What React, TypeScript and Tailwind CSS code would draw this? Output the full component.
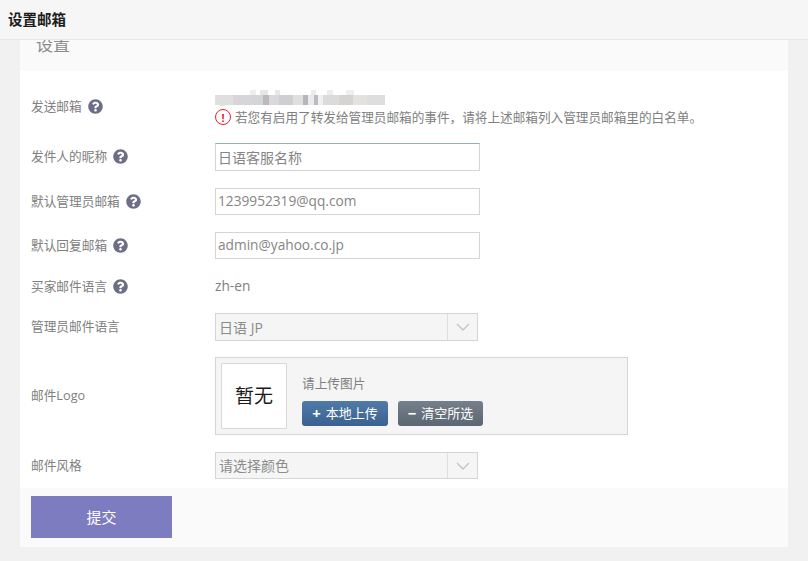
import { FaQuestionCircle } from "react-icons/fa";

const font = "font-['Open_Sans','Noto_Sans_CJK_SC',sans-serif]";

// blurred-out address in the first row, as [x, width, colour]
const smudgeTop: [number, number, string][] = [
  [35, 6, "#eceef0"],
  [45, 8, "#e4e6ea"],
  [60, 5, "#e6e7ea"],
  [96, 5, "#eeeae8"],
  [112, 6, "#eeecea"],
  [131, 8, "#f0eeec"],
];
const smudgeMid: [number, number, string][] = [
  [0, 18, "#dfdfe0"],
  [18, 18, "#d6d6d8"],
  [36, 12, "#d2d6d9"],
  [48, 6, "#bdb9ba"],
  [54, 10, "#d8d9db"],
  [64, 14, "#cfcfd1"],
  [78, 10, "#dfdfdf"],
  [88, 5, "#b6b6ba"],
  [93, 6, "#ebebeb"],
  [99, 4, "#bcbcc0"],
  [103, 5, "#f0f0f0"],
  [108, 16, "#dcdbd9"],
  [124, 14, "#d6d4d2"],
  [138, 14, "#e4e2de"],
  [152, 18, "#dedede"],
];

const Help = () => <FaQuestionCircle className="size-[15px] shrink-0 text-[#6d6e85]" />;

const Label = ({ text, help }: { text: string; help?: boolean }) => (
  <div className="flex items-center gap-[6px] text-[12.7px] text-[#808080]">
    <span>{text}</span>
    {help && <Help />}
  </div>
);

const TextInput = ({ value, focused, latin }: { value: string; focused?: boolean; latin?: boolean }) => (
  <div
    className={`flex w-[265px] items-center border border-[#d5d5d5] px-[2px] text-[#858585] ${
      latin ? "text-[13.7px]" : "text-[14px]"
    } ${focused ? "h-[28px] border-t-[#8fabd6]" : "h-[27px]"}`}
  >
    {value}
  </div>
);

const SelectBox = ({ value, tall }: { value: string; tall?: boolean }) => (
  <div
    className={`flex w-[263px] items-stretch border border-[#d5d5d5] bg-[#f5f5f5] text-[14px] text-[#8c8c8c] ${
      tall ? "h-[28px]" : "h-[27px]"
    }`}
  >
    <div className="flex flex-1 items-center px-[3px]">{value}</div>
    <div className="flex w-[30px] items-center justify-center border-l border-[#dedede]">
      <svg width="14" height="8" viewBox="0 0 14 8" fill="none" stroke="#c4c4c4" strokeWidth="1.4">
        <path d="M1 1l6 6 6-6" />
      </svg>
    </div>
  </div>
);

export default function App() {
  return (
    <div className={`flex h-[561px] w-[808px] flex-col overflow-hidden bg-[#f1f1f1] ${font}`}>
      {/* Header */}
      <div className="flex h-[40px] shrink-0 items-center border-b border-[#e8e8e8] bg-[#f6f6f6] pl-[8px] text-[14.5px] font-bold text-[#1c1c1c]">
        设置邮箱
      </div>

      <div className="mx-[20px] flex h-[507px] flex-col">
        {/* Card title, scrolled partly out of view */}
        <div className="h-[31px] overflow-hidden bg-[#fafafa] pl-[16px]">
          <div className="-mt-[7px] text-[17px] leading-[24px] text-[#8a8a8a]">设置</div>
        </div>

        {/* Form */}
        <div className="flex h-[417px] flex-col bg-white pl-[11px]">
          <div className="mt-[20px] flex h-[35px]">
            <div className="flex w-[184px] items-center pb-[4px]">
              <Label text="发送邮箱" help />
            </div>
            <div className="-mt-[1px] flex flex-col">
              <svg width="170" height="16" viewBox="0 0 170 16" className="block">
                {smudgeTop.map(([x, w, c]) => (
                  <rect key={x} x={x} y="0" width={w} height="5" fill={c} />
                ))}
                {smudgeMid.map(([x, w, c]) => (
                  <rect key={x} x={x} y="5" width={w} height="10" fill={c} />
                ))}
                <rect x="5" y="15" width="5" height="1" fill="#f4dcdc" />
              </svg>
              <div className="flex items-center gap-[4px] whitespace-nowrap pt-[2px] text-[12.64px] leading-[18px] text-[#808080]">
                <span className="flex size-[16px] shrink-0 items-center justify-center rounded-full border-[1.5px] border-[#f01838] text-[11px] font-bold leading-none text-[#f01838]">
                  !
                </span>
                若您有启用了转发给管理员邮箱的事件，请将上述邮箱列入管理员邮箱里的白名单。
              </div>
            </div>
          </div>

          <div className="mt-[17px] flex h-[28px] items-center">
            <div className="w-[184px]">
              <Label text="发件人的昵称" help />
            </div>
            <TextInput value="日语客服名称" focused />
          </div>

          <div className="mt-[17px] flex h-[27px] items-center">
            <div className="w-[184px]">
              <Label text="默认管理员邮箱" help />
            </div>
            <TextInput value="1239952319@qq.com" latin />
          </div>

          <div className="mt-[17px] flex h-[27px] items-center">
            <div className="w-[184px]">
              <Label text="默认回复邮箱" help />
            </div>
            <TextInput value="admin@yahoo.co.jp" latin />
          </div>

          <div className="mt-[14px] flex h-[27px] items-center">
            <div className="w-[184px]">
              <Label text="买家邮件语言" help />
            </div>
            <span className="text-[13.7px] text-[#808080]">zh-en</span>
          </div>

          <div className="mt-[13px] flex h-[28px] items-center">
            <div className="w-[184px]">
              <Label text="管理员邮件语言" />
            </div>
            <SelectBox value="日语 JP" tall />
          </div>

          <div className="mt-[16px] flex h-[78px] items-center">
            <div className="w-[184px]">
              <Label text="邮件Logo" />
            </div>
            <div className="flex h-[78px] w-[413px] items-center border border-[#d5d5d5] bg-[#f5f5f5] pl-[5px]">
              <div className="flex size-[66px] items-center justify-center border border-[#d9d9d9] bg-white text-[19px] text-[#1a1a1a]">
                暂无
              </div>
              <div className="ml-[15px] flex flex-col">
                <div className="mt-[8px] text-[12.7px] leading-[18px] text-[#808080]">请上传图片</div>
                <div className="mt-[9px] flex gap-[10px]">
                  <div className="flex h-[25px] w-[86px] items-center justify-center gap-[5px] rounded-[3px] bg-gradient-to-b from-[#4f7ba8] to-[#3b6190] text-[13px] text-white">
                    <span className="text-[15px] font-bold leading-none">+</span>本地上传
                  </div>
                  <div className="flex h-[25px] w-[85px] items-center justify-center gap-[5px] rounded-[3px] bg-gradient-to-b from-[#76808c] to-[#5c6573] text-[13px] text-white">
                    <span className="text-[15px] font-bold leading-none">−</span>清空所选
                  </div>
                </div>
              </div>
            </div>
          </div>

          <div className="mt-[17px] flex h-[27px] items-center">
            <div className="w-[184px]">
              <Label text="邮件风格" />
            </div>
            <SelectBox value="请选择颜色" />
          </div>
        </div>

        {/* Footer */}
        <div className="h-[59px] bg-[#fafafa] pl-[11px] pt-[8px]">
          <div className="flex h-[42px] w-[141px] items-center justify-center bg-[#7e7cc0] text-[15px] text-white">
            提交
          </div>
        </div>
      </div>
    </div>
  );
}
